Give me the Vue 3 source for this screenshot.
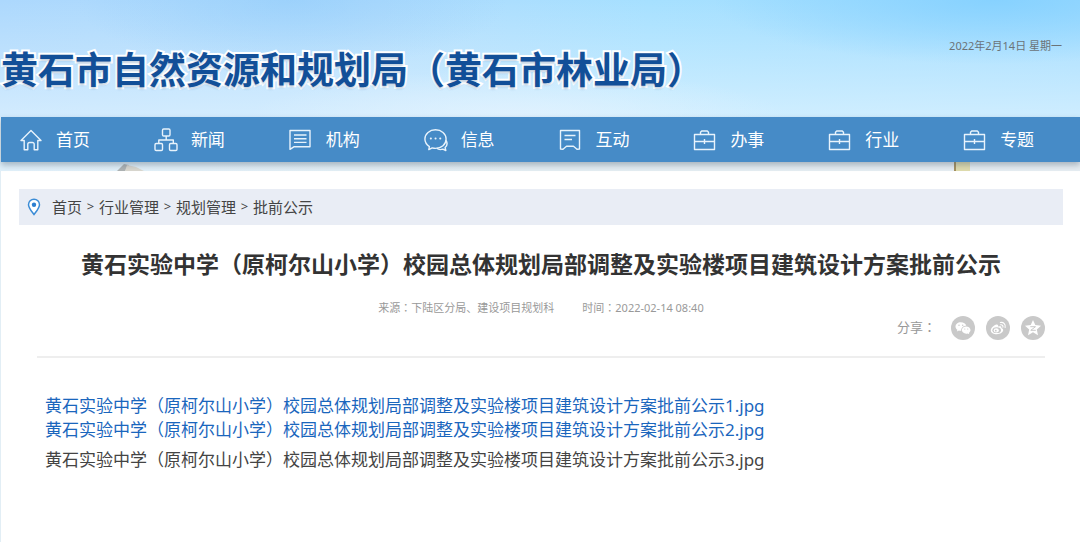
<script setup>
const navItems = [
  { name: '首页', icon: 'home' },
  { name: '新闻', icon: 'tree' },
  { name: '机构', icon: 'board' },
  { name: '信息', icon: 'chat' },
  { name: '互动', icon: 'note' },
  { name: '办事', icon: 'case' },
  { name: '行业', icon: 'case' },
  { name: '专题', icon: 'case' },
]

const crumbs = ['首页', '行业管理', '规划管理', '批前公示']

const title = '黄石实验中学（原柯尔山小学）校园总体规划局部调整及实验楼项目建筑设计方案批前公示'

const files = [
  { id: 1, active: false },
  { id: 2, active: false },
  { id: 3, active: true },
]
</script>

<template>
  <div class="page">
    <header class="site-header">
      <h1>黄石市自然资源和规划局（黄石市林业局）</h1>
      <time datetime="2022-02-14">2022年2月14日 星期一</time>
    </header>

    <nav class="main-nav">
      <a v-for="item in navItems" :key="item.name" href="#">
        <svg viewBox="0 0 24 24" aria-hidden="true">
          <g v-if="item.icon === 'home'">
            <path d="M2 12.5 12 2.6l10 9.900h-3.200v9.200h-3.600v-5.400a1.800 1.800 0 0 0-1.800-1.800h-2.800a1.800 1.800 0 0 0-1.800 1.800v5.400H5.200v-9.200z" />
          </g>
          <g v-else-if="item.icon === 'tree'">
            <rect x="8.5" y="1" width="7.500" height="7" rx="1.200" />
            <rect x="1" y="15.5" width="7.500" height="7" rx="1.200" />
            <rect x="15.5" y="15.5" width="7.500" height="7" rx="1.200" />
            <path d="M12.200 8v4M4.800 15.500V12h14.500v3.500" />
          </g>
          <g v-else-if="item.icon === 'board'">
            <path d="M1 2.500h20v16.300H4.800L1 21.300zM5 7h12.500M5 10.700h12.500M5 14.400h12.500" />
          </g>
          <g v-else-if="item.icon === 'chat'">
            <path d="M5.400 18.600C2.600 16.800.9 14.200.9 11.100.9 5.800 5.600 1.800 11.500 1.800s10.600 4 10.600 9.300-4.700 9.300-10.600 9.300c-1.200 0-2.300-.2-3.300-.5L4.800 21.600z" />
            <path d="M22 12.500c1.600 2.500 1 5.300-.9 7l.7 3-3-1.300c-2.600.8-4.600.3-6-.9" />
            <path class="dots" d="M6.800 10.500h.1M11.500 10.500h.1M16.200 10.500h.1" />
          </g>
          <g v-else-if="item.icon === 'note'">
            <path d="M1.500 2.500h19v18.500l-2.500.3-3.500-3h-7l-3.500 3-2.500-.3zM5.500 7.500h11M5.500 11.500h7.500" />
          </g>
          <g v-else>
            <path d="M1.500 6.500h20v15h-20zM7.500 6.500V4.300L8.700 3h5.600l1.200 1.300v2.200M1.500 13.500h20M11.500 11v5" />
          </g>
        </svg>
        <span>{{ item.name }}</span>
      </a>
    </nav>

    <div class="skyline">
      <svg class="tower" viewBox="0 0 32 9" aria-hidden="true">
        <path d="M0 9 7 2l5 1-4 6z" fill="#aeb3b4" />
        <path d="m8 9 2-6 9 2 8 4z" fill="#d9d7cf" />
      </svg>
      <svg class="wall" viewBox="0 0 18 9" aria-hidden="true">
        <path d="M2 0h14v9H2z" fill="#dfdcae" />
        <path d="M0 0h2v9H0z" fill="#a4905f" />
      </svg>
    </div>

    <main class="panel">
      <nav class="crumbs">
        <svg viewBox="0 0 14 18" aria-hidden="true">
          <path d="M7 16.500C4 12.500 1.500 9.800 1.500 6.700a5.500 5.500 0 0 1 11 0c0 3.100-2.500 5.800-5.500 9.800z" fill="#fff" stroke="#3b8cd6" stroke-width="1.500" />
          <circle cx="7" cy="6.700" r="2.200" fill="#2c7fd0" />
        </svg>
        <template v-for="(crumb, i) in crumbs" :key="crumb">
          <span v-if="i" class="arrow">&gt;</span>
          <a href="#">{{ crumb }}</a>
        </template>
      </nav>

      <article>
        <h2>{{ title }}</h2>
        <p class="meta">
          <span>来源<span class="colon">：</span>下陆区分局、建设项目规划科</span>
          <span>时间<span class="colon">：</span>2022-02-14 08:40</span>
        </p>
        <div class="share">
          <span class="share-label">分享<span class="colon">：</span></span>
          <button type="button" aria-label="微信">
            <svg viewBox="0 0 24 24">
              <path d="M9.800 6.200c-3 0-5.300 1.900-5.300 4.300 0 1.400.7 2.500 1.900 3.300l-.5 1.700 2-1c.6.2 1.200.3 1.900.3h.5c-.5-3 2-5.100 5-5.100-.5-2.100-2.800-3.500-5.500-3.500z" />
              <path d="M15.200 10.500c-2.500 0-4.300 1.600-4.300 3.600s1.900 3.600 4.300 3.600c.5 0 1-.1 1.500-.2l1.600.8-.4-1.400c1-.7 1.600-1.700 1.600-2.800 0-2-1.900-3.600-4.300-3.600z" />
              <g fill="#c9c9c9"><circle cx="8" cy="9.300" r=".7" /><circle cx="11.700" cy="9.300" r=".7" /><circle cx="13.800" cy="13" r=".6" /><circle cx="16.700" cy="13" r=".6" /></g>
            </svg>
          </button>
          <button type="button" aria-label="微博">
            <svg viewBox="0 0 24 24">
              <path d="M10.500 8.600c-2.400.4-5.700 3.400-5.700 5.800 0 2.300 2.800 3.800 5.900 3.800 3.900 0 6.500-2.200 6.500-4.200 0-1.200-1-1.800-1.900-2.100.6-1.600-.9-2.300-3.200-1.300.3-1.300-.2-2.200-1.600-2z" />
              <ellipse cx="10.700" cy="14.200" rx="4.300" ry="2.900" fill="#c9c9c9" />
              <ellipse cx="10.300" cy="14.400" rx="2.600" ry="2.100" />
              <circle cx="9.800" cy="14.700" r=".9" fill="#c9c9c9" />
              <path d="M14.300 6.500c3.200-.7 5.700 1.900 4.800 5M14.600 8.800c1.600-.3 2.700.8 2.300 2.300" fill="none" stroke="#fff" stroke-width="1.100" stroke-linecap="round" />
            </svg>
          </button>
          <button type="button" aria-label="QQ空间">
            <svg viewBox="0 0 24 24">
              <path d="m12 4 2.300 5.100 5.700.6-4.200 3.800 1.200 5.700L12 16.300l-5 2.900 1.200-5.700L4 9.700l5.700-.6z" />
              <path d="M9.300 10.700h5.200l-4.700 3.600h5" fill="none" stroke="#c9c9c9" stroke-width="1" />
            </svg>
          </button>
        </div>

        <ul class="files">
          <li v-for="file in files" :key="file.id">
            <a href="#" :class="{ active: file.active }">{{ title }}{{ file.id }}.jpg</a>
          </li>
        </ul>
      </article>
    </main>
  </div>
</template>

<style>
body { margin: 0; background: #fff; }
</style>

<style scoped>
.page { display: flex; flex-direction: column; min-height: 100vh; background: #e2eef5; color: #333; font-family: "Noto Sans", "Noto Sans CJK SC", sans-serif; }
.colon { font-family: "Noto Sans CJK TC", sans-serif; }
a { color: inherit; text-decoration: none; }
h1,
h2,
p,
ul { margin: 0; padding: 0; }

.site-header {
  display: flex;
  align-items: flex-start;
  justify-content: space-between;
  box-sizing: border-box;
  height: 117px;
  padding: 38px 18px 0 1px;
  background:
    radial-gradient(ellipse 20% 60% at 27% 0%, rgba(138, 200, 250, 0.5), transparent),
    radial-gradient(ellipse 26% 55% at 92% 0%, rgba(128, 207, 255, 0.8), transparent),
    radial-gradient(ellipse 25% 40% at 48% 100%, rgba(228, 243, 254, 0.8), transparent),
    linear-gradient(rgba(255, 255, 255, 0), rgba(236, 248, 255, 0.6)),
    linear-gradient(90deg, #acd8fd, #b0dcfd 35%, #a6e0ff 60%, #a1dcff);
}
.site-header h1 { color: #124f98; font-size: 37px; font-weight: 700; line-height: 64px; white-space: nowrap; -webkit-text-stroke: 4px #fff; paint-order: stroke fill; text-shadow: 0 2px 2px rgba(60, 110, 160, 0.3); }
.site-header time { color: #6b7378; font-size: 11px; line-height: 16px; white-space: nowrap; }

.main-nav { position: relative; display: flex; margin-left: 1px; background: #468bc7; box-shadow: 0 3px 6px rgba(70, 90, 110, 0.4); }
.main-nav a { display: flex; flex: 1; align-items: center; gap: 13px; box-sizing: border-box; min-width: 0; height: 45px; padding-left: 18px; color: #fff; font-size: 17px; white-space: nowrap; }
.main-nav a span { padding-bottom: 2px; }
.main-nav svg { width: 24px; height: 24px; fill: none; stroke: #e8f3fc; stroke-width: 1.4; stroke-linejoin: round; }
.main-nav .dots { stroke-width: 2; stroke-linecap: round; }

.skyline { display: flex; justify-content: space-between; height: 9px; padding: 0 108px 0 117px; background: linear-gradient(90deg, #e0f0fa, #e3edf2 50%, #e6edf2); }
.skyline .tower { width: 32px; height: 9px; }
.skyline .wall { width: 18px; height: 9px; }

.panel { flex: 1; margin-left: 1px; padding: 18px 17px 0 18px; background: #fff; }
.crumbs { display: flex; align-items: center; height: 36px; padding-left: 8px; background: #e9edf5; color: #444; font-size: 15px; }
.crumbs a,
.crumbs .arrow { padding-bottom: 2px; }
.crumbs svg { width: 14px; height: 18px; margin-right: 11px; }
.crumbs .arrow { width: 17px; font-size: 13px; text-align: center; }

article h2 { margin-top: 21px; color: #333; font-size: 23px; font-weight: 700; line-height: 36px; text-align: center; }
.meta { display: flex; justify-content: center; gap: 28px; margin-top: 17px; color: #999; font-size: 11px; line-height: 16px; }
.share { display: flex; align-items: center; justify-content: flex-end; gap: 11px; margin: 0 18px; padding-bottom: 16px; border-bottom: 2px solid #eee; color: #999; font-size: 13px; }
.share-label { padding: 0 4px 4px 0; }
.share button { width: 24px; height: 24px; border: 0; border-radius: 50%; background: #c9c9c9; padding: 0; cursor: pointer; }
.share button svg { display: block; width: 24px; height: 24px; fill: #fff; }

.files { margin-top: 36px; padding-left: 26px; font-size: 17px; line-height: 24px; list-style: none; }
.files a { color: #1a66bd; }
.files a.active { color: #444; }
.files li:last-child { margin-top: 6px; }
</style>
